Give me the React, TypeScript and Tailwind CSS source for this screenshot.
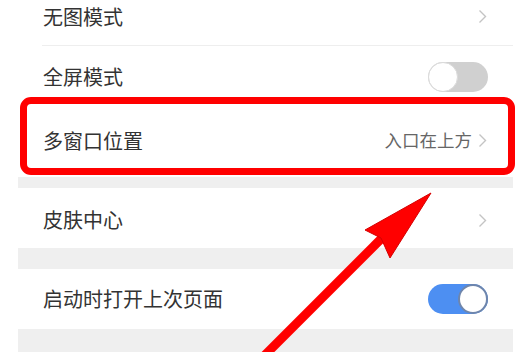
import React from 'react';

const Chevron: React.FC = () => (
  <svg width="9" height="15" viewBox="0 0 9 15" className="ml-[6px]">
    <polyline points="1.5,1.5 7.5,7.5 1.5,13.5" fill="none" stroke="#c4c4c4" strokeWidth="1.4" />
  </svg>
);

const Toggle: React.FC<{ on?: boolean }> = ({ on }) => (
  <div
    className={
      on
        ? 'w-[60px] h-[30px] rounded-full bg-[#4d8ff2] flex items-center justify-end'
        : 'w-[60px] h-[30px] rounded-full bg-[#d0d0d0] flex items-center justify-start'
    }
  >
    <div
      className={
        on
          ? 'w-[30px] h-[30px] rounded-full bg-white border-2 border-[#6f86ac]'
          : 'w-[30px] h-[30px] rounded-full bg-white border border-[#dadada]'
      }
    />
  </div>
);

const Band: React.FC<{ h: string }> = ({ h }) => <div className={`${h} bg-[#efefef]`} />;

export default function App() {
  return (
    <div
      className="relative w-[530px] h-[352px] overflow-hidden bg-white"
      style={{ fontFamily: '"Noto Sans CJK SC", "Noto Sans", sans-serif' }}
    >
      <div className="ml-[18px] w-[495px] flex flex-col text-[20px] text-[#333]">
        {/* 无图模式 */}
        <div className="h-[45px] flex items-center justify-between pl-[25px] pr-[26px] pb-[12px]">
          <span>无图模式</span>
          <Chevron />
        </div>
        <div className="ml-[24px] h-px bg-[#eeeeee]" />

        {/* 全屏模式 */}
        <div className="h-[62px] flex items-center justify-between pl-[25px] pr-[25px]">
          <span>全屏模式</span>
          <Toggle />
        </div>

        {/* 多窗口位置 */}
        <div className="h-[69px] flex items-center justify-between pl-[25px] pr-[26px] pb-[4px]">
          <span>多窗口位置</span>
          <div className="flex items-center">
            <span className="text-[17.5px] text-[#666]">入口在上方</span>
            <Chevron />
          </div>
        </div>
        <Band h="h-[11px]" />

        {/* 皮肤中心 */}
        <div className="h-[60px] flex items-center justify-between pl-[25px] pr-[26px] pt-[4px]">
          <span>皮肤中心</span>
          <Chevron />
        </div>
        <Band h="h-[21px]" />

        {/* 启动时打开上次页面 */}
        <div className="h-[60px] flex items-center justify-between pl-[25px] pr-[25px]">
          <span>启动时打开上次页面</span>
          <Toggle on />
        </div>
        <Band h="h-[30px]" />
      </div>

      {/* red highlight box */}
      <div className="absolute left-[20px] top-[97px] w-[495px] h-[78px] rounded-[11px] border-[7px] border-[#ff0000]" />

      {/* red arrow */}
      <svg className="absolute left-0 top-0" width="530" height="352" viewBox="0 0 530 352">
        <line x1="250" y1="370" x2="384" y2="236" stroke="#ff0000" strokeWidth="9" />
        <polygon
          points="431,193 365,230 381,238 390,258"
          fill="#ff0000"
          stroke="#d40000"
          strokeWidth="1"
          strokeLinejoin="round"
        />
      </svg>
    </div>
  );
}
